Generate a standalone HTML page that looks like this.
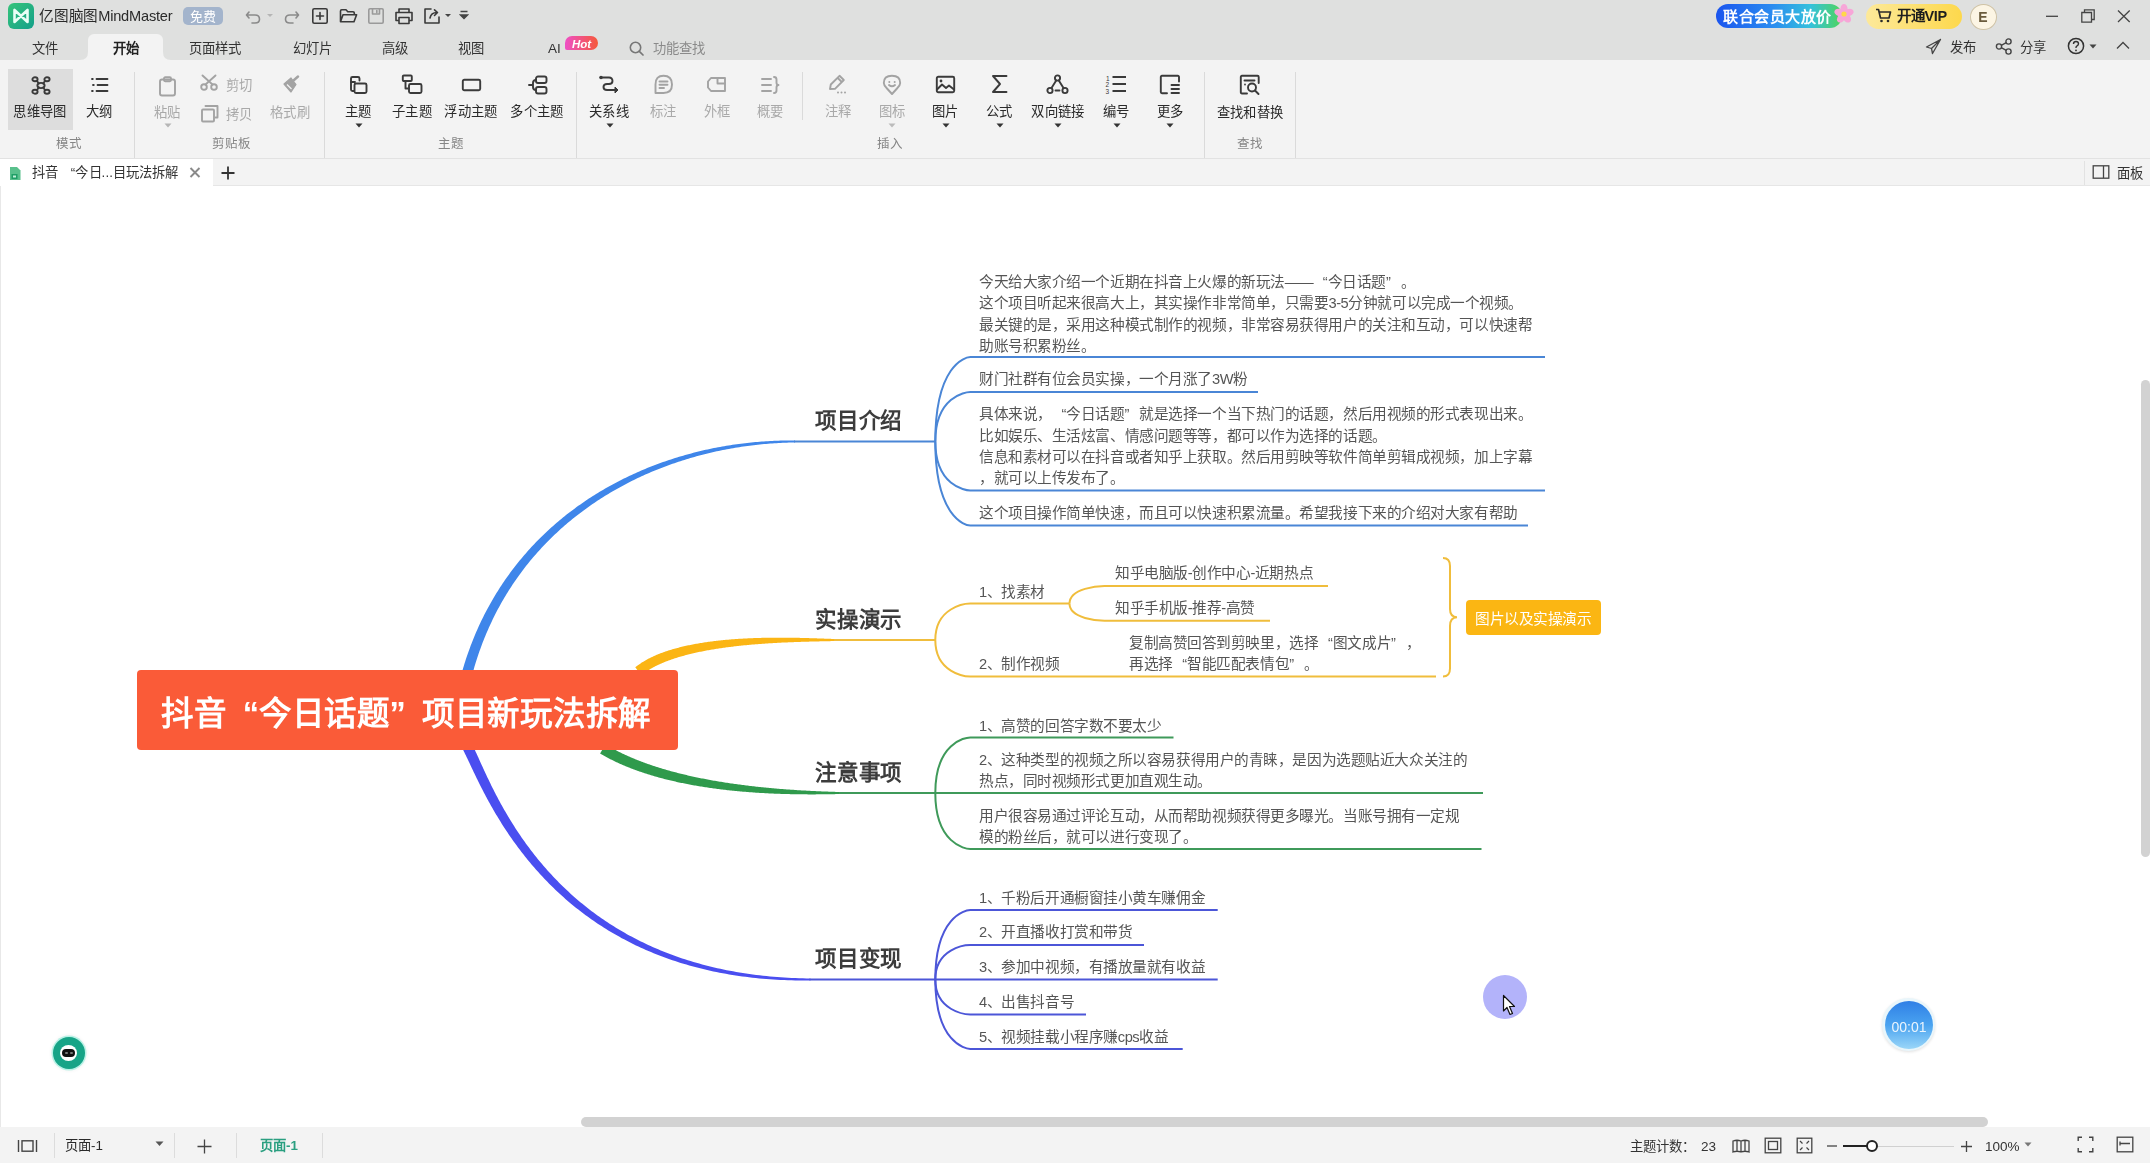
<!DOCTYPE html><html lang="zh-CN"><head><meta charset="utf-8"><style>
*{box-sizing:border-box;margin:0;padding:0}
html,body{width:2150px;height:1163px;overflow:hidden;background:#fff;font-family:"Liberation Sans",sans-serif;color:#333}
.a{position:absolute;white-space:nowrap}
.t{position:absolute;white-space:nowrap;line-height:1;will-change:transform}
</style></head><body>

<div class="a" style="left:0;top:0;width:2150px;height:60px;background:#dfe0df"></div>
<div class="a" style="left:0;top:60px;width:2150px;height:98px;background:#f3f3f3"></div>
<div class="a" style="left:0;top:158px;width:2150px;height:1px;background:#e2e2e2"></div>
<div class="a" style="left:0;top:159px;width:2150px;height:27px;background:#f3f3f3"></div>
<div class="a" style="left:213px;top:185px;width:1937px;height:1px;background:#e6e6e6"></div>
<div class="a" style="left:0;top:159px;width:213px;height:27px;background:#fff"></div>
<div class="a" style="left:0;top:186px;width:2150px;height:941px;background:#fff"></div>
<div class="a" style="left:0;top:186px;width:1px;height:941px;background:#e8e8e8"></div>
<div class="a" style="left:0;top:1127px;width:2150px;height:36px;background:#f3f3f3"></div>
<div class="a" style="left:581px;top:1117px;width:1407px;height:10px;border-radius:5px;background:#d2d2d2"></div>
<div class="a" style="left:2141px;top:380px;width:9px;height:476.5px;border-radius:4.5px;background:#d2d2d2"></div>
<div class="a" style="left:8px;top:3px;width:26px;height:26px;background:linear-gradient(135deg,#37c47a,#13a08a);border-radius:6px"></div>
<svg class="a" style="left:8px;top:3px;" width="26" height="26" viewBox="0 0 26 26"><path d="M6.5,7 L6.5,19 L13,13 Z M19.5,7 L19.5,19 L13,13 Z" fill="none" stroke="#e9fff6" stroke-width="2.6" stroke-linejoin="round"/></svg>
<div class="t" style="left:39.0px;top:8.5px;font-size:14.6px;font-weight:normal;letter-spacing:-0.2px;color:#2a2a2a;">亿图脑图MindMaster</div>
<div class="a" style="left:183px;top:7px;width:40px;height:18px;background:#a3b4cc;border-radius:5px"></div>
<div class="t" style="left:183.0px;top:9.9px;width:40px;text-align:center;font-size:13px;font-weight:normal;letter-spacing:0px;color:#fff;">免费</div>
<svg class="a" style="left:245px;top:7px;" width="16" height="18" viewBox="0 0 16 18"><path d="M4,5 L1.5,8 L4,11 M2,8 L10,8 Q14.5,8 14.5,12.2 Q14.5,16 10,16 L7,16" stroke="#8a8a8a" fill="none" stroke-width="1.6" stroke-linecap="round" stroke-linejoin="round"/></svg>
<svg class="a" style="left:266px;top:13px;" width="8" height="6" viewBox="0 0 8 6"><path d="M1,1 L7,1 L4,4 Z" fill="#b5b5b5"/></svg>
<svg class="a" style="left:284px;top:7px;" width="16" height="18" viewBox="0 0 16 18"><path d="M12,5 L14.5,8 L12,11 M14,8 L6,8 Q1.5,8 1.5,12.2 Q1.5,16 6,16 L9,16" stroke="#8a8a8a" fill="none" stroke-width="1.6" stroke-linecap="round" stroke-linejoin="round"/></svg>
<svg class="a" style="left:311px;top:7px;" width="18" height="18" viewBox="0 0 18 18"><rect x="1.8" y="1.8" width="14.4" height="14.4" rx="1.5" stroke="#3a3a3a" fill="none" stroke-width="1.6" stroke-linecap="round" stroke-linejoin="round"/><path d="M9,5.5 V12.5 M5.5,9 H12.5" stroke="#3a3a3a" fill="none" stroke-width="1.6" stroke-linecap="round" stroke-linejoin="round" stroke-width="1.9"/></svg>
<svg class="a" style="left:339px;top:8px;" width="19" height="16" viewBox="0 0 19 16"><path d="M1.5,13.5 V3 Q1.5,1.8 2.7,1.8 H7 L8.8,3.8 H14 Q15.3,3.8 15.3,5 V6.5 M1.5,13.8 L4,6.8 H17.6 L15,13.8 Z" stroke="#3a3a3a" fill="none" stroke-width="1.6" stroke-linecap="round" stroke-linejoin="round"/></svg>
<svg class="a" style="left:367px;top:7px;" width="18" height="18" viewBox="0 0 18 18"><rect x="1.8" y="1.8" width="14.4" height="14.4" rx="1.2" stroke="#9a9a9a" fill="none" stroke-width="1.6" stroke-linecap="round" stroke-linejoin="round"/><path d="M5.5,2 V7 H12.5 V2 M9.8,3.5 V5.5" stroke="#9a9a9a" fill="none" stroke-width="1.6" stroke-linecap="round" stroke-linejoin="round"/></svg>
<svg class="a" style="left:394px;top:7px;" width="20" height="18" viewBox="0 0 20 18"><path d="M5,5.5 V2 H15 V5.5 M4.5,13.5 H2 V5.5 H18 V13.5 H15.5 M5,10.5 H15 V16.5 H5 Z" stroke="#3a3a3a" fill="none" stroke-width="1.6" stroke-linecap="round" stroke-linejoin="round"/></svg>
<svg class="a" style="left:423px;top:7px;" width="18" height="18" viewBox="0 0 18 18"><path d="M8,2 H2 V16 H16 V10 M7,11 Q8,5.5 14,5.5 M11.5,2.8 L14.5,5.5 L11.5,8.5" stroke="#3a3a3a" fill="none" stroke-width="1.6" stroke-linecap="round" stroke-linejoin="round"/></svg>
<svg class="a" style="left:444px;top:13px;" width="8" height="6" viewBox="0 0 8 6"><path d="M1,1 L7,1 L4,4 Z" fill="#444"/></svg>
<svg class="a" style="left:459px;top:10px;" width="10" height="12" viewBox="0 0 10 12"><path d="M1.5,1.5 H8.5 M1.5,5 L8.5,5 L5,8.5 Z" stroke="#444" stroke-width="1.4" fill="#444"/></svg>
<div class="a" style="left:88px;top:34px;width:75px;height:27px;background:#f3f3f3;border-radius:6px 6px 0 0"></div>
<svg class="a" style="left:80px;top:52px;" width="8" height="8" viewBox="0 0 8 8"><path d="M0,8 Q8,8 8,0 V8 Z" fill="#f3f3f3"/></svg>
<svg class="a" style="left:163px;top:52px;" width="8" height="8" viewBox="0 0 8 8"><path d="M8,8 Q0,8 0,0 V8 Z" fill="#f3f3f3"/></svg>
<div class="t" style="left:15.0px;top:41.8px;width:60px;text-align:center;font-size:13.33px;font-weight:normal;letter-spacing:0px;color:#333;">文件</div>
<div class="t" style="left:95.5px;top:41.8px;width:60px;text-align:center;font-size:13.33px;font-weight:bold;letter-spacing:0px;color:#222;">开始</div>
<div class="t" style="left:175.0px;top:41.8px;width:80px;text-align:center;font-size:13.33px;font-weight:normal;letter-spacing:0px;color:#333;">页面样式</div>
<div class="t" style="left:272.0px;top:41.8px;width:80px;text-align:center;font-size:13.33px;font-weight:normal;letter-spacing:0px;color:#333;">幻灯片</div>
<div class="t" style="left:365.0px;top:41.8px;width:60px;text-align:center;font-size:13.33px;font-weight:normal;letter-spacing:0px;color:#333;">高级</div>
<div class="t" style="left:441.0px;top:41.8px;width:60px;text-align:center;font-size:13.33px;font-weight:normal;letter-spacing:0px;color:#333;">视图</div>
<div class="t" style="left:547.5px;top:42.2px;font-size:13.5px;font-weight:normal;letter-spacing:0px;color:#333;">AI</div>
<div class="a" style="left:565px;top:36px;width:33px;height:14px;border-radius:7px 7px 7px 2px;background:linear-gradient(90deg,#ee4fc6,#f5593a)"></div>
<div class="t" style="left:565.0px;top:38.5px;width:33px;text-align:center;font-size:11.5px;font-weight:bold;letter-spacing:0px;color:#fff;font-style:italic">Hot</div>
<svg class="a" style="left:629px;top:41px;" width="16" height="15" viewBox="0 0 16 15"><circle cx="6.5" cy="6.5" r="5.2" fill="none" stroke="#777" stroke-width="1.6"/><path d="M10.3,10.3 L14,14" stroke="#777" stroke-width="1.7" stroke-linecap="round"/></svg>
<div class="t" style="left:653.0px;top:42.3px;font-size:13.33px;font-weight:normal;letter-spacing:0px;color:#8a8a8a;">功能查找</div>
<div class="a" style="left:1716px;top:3.5px;width:126px;height:24.5px;border-radius:12.5px;background:linear-gradient(90deg,#1b55ee 0%,#2a8cf0 45%,#35c1dc 75%,#4fd55a 100%)"></div>
<div class="t" style="left:1723.0px;top:9.2px;font-size:15px;font-weight:bold;letter-spacing:0.5px;color:#fff;">联合会员大放价</div>
<svg class="a" style="left:1833px;top:3px;" width="22" height="22" viewBox="0 0 22 22"><g transform="translate(11,11)"><ellipse cx="0" cy="-5" rx="3.6" ry="5" fill="#f7a6d8" transform="rotate(0)"/><ellipse cx="0" cy="-5" rx="3.6" ry="5" fill="#f7a6d8" transform="rotate(72)"/><ellipse cx="0" cy="-5" rx="3.6" ry="5" fill="#f7a6d8" transform="rotate(144)"/><ellipse cx="0" cy="-5" rx="3.6" ry="5" fill="#f7a6d8" transform="rotate(216)"/><ellipse cx="0" cy="-5" rx="3.6" ry="5" fill="#f7a6d8" transform="rotate(288)"/><circle r="2.6" fill="#ffd84a"/></g></svg>
<div class="a" style="left:1866px;top:3.5px;width:96px;height:25px;border-radius:12.5px;background:linear-gradient(90deg,#fde99a,#fdd84c)"></div>
<svg class="a" style="left:1875px;top:8px;" width="17" height="15" viewBox="0 0 17 15"><path d="M1,1.5 H3.5 L5.5,10 H14 L15.5,4 H4.5" fill="none" stroke="#2a2a2a" stroke-width="1.7" stroke-linejoin="round"/><circle cx="6.5" cy="13" r="1.3" fill="#2a2a2a"/><circle cx="13" cy="13" r="1.3" fill="#2a2a2a"/></svg>
<div class="t" style="left:1897.0px;top:9.3px;font-size:14.5px;font-weight:bold;letter-spacing:-0.3px;color:#1e1e1e;">开通VIP</div>
<div class="a" style="left:1970px;top:3.5px;width:26.5px;height:26px;border-radius:50%;background:#fcf5e4;border:1.5px solid #cfc3a6"></div>
<div class="t" style="left:1970.2px;top:10.3px;width:26px;text-align:center;font-size:14px;font-weight:bold;letter-spacing:0px;color:#6a5b3c;">E</div>
<svg class="a" style="left:2044px;top:8px;" width="16" height="16" viewBox="0 0 16 16"><path d="M2,8.3 H14" stroke="#444" stroke-width="1.3"/></svg>
<svg class="a" style="left:2080px;top:8px;" width="16" height="16" viewBox="0 0 16 16"><path d="M4.5,4 V1.8 H14.2 V11.5 H12 M1.8,4.5 H11.5 V14.2 H1.8 Z" fill="none" stroke="#444" stroke-width="1.3"/></svg>
<svg class="a" style="left:2116px;top:8px;" width="16" height="16" viewBox="0 0 16 16"><path d="M2,2.5 L13.7,14 M13.7,2.5 L2,14" stroke="#444" stroke-width="1.3"/></svg>
<svg class="a" style="left:1925px;top:38px;" width="17" height="17" viewBox="0 0 17 17"><path d="M15.5,1.5 L1.5,9 L6.5,10.5 Z M15.5,1.5 L6.5,10.5 L7.5,15.5 Z" fill="none" stroke="#444" stroke-width="1.3" stroke-linejoin="round"/></svg>
<div class="t" style="left:1950.0px;top:41.3px;font-size:13.33px;font-weight:normal;letter-spacing:0px;color:#333;">发布</div>
<svg class="a" style="left:1995px;top:38px;" width="18" height="17" viewBox="0 0 18 17"><circle cx="4" cy="8.5" r="2.6" fill="none" stroke="#444" stroke-width="1.4"/><circle cx="13.5" cy="3.5" r="2.6" fill="none" stroke="#444" stroke-width="1.4"/><circle cx="13.5" cy="13.5" r="2.6" fill="none" stroke="#444" stroke-width="1.4"/><path d="M6.3,7.3 L11.2,4.7 M6.3,9.7 L11.2,12.3" stroke="#444" stroke-width="1.4"/></svg>
<div class="t" style="left:2020.0px;top:41.3px;font-size:13.33px;font-weight:normal;letter-spacing:0px;color:#333;">分享</div>
<svg class="a" style="left:2067px;top:37px;" width="18" height="18" viewBox="0 0 18 18"><circle cx="9" cy="9" r="7.6" fill="none" stroke="#333" stroke-width="1.5"/><path d="M6.5,7 Q6.5,4.5 9,4.5 Q11.5,4.5 11.5,6.8 Q11.5,8.3 9.5,9.3 Q9,9.6 9,11" fill="none" stroke="#333" stroke-width="1.4"/><circle cx="9" cy="13.4" r="0.9" fill="#333"/></svg>
<svg class="a" style="left:2089px;top:44px;" width="8" height="5" viewBox="0 0 8 5"><path d="M0.5,0.5 H7.5 L4,4.5 Z" fill="#444"/></svg>
<svg class="a" style="left:2115px;top:40px;" width="16" height="10" viewBox="0 0 16 10"><path d="M2,8.5 L8,2.5 L14,8.5" fill="none" stroke="#444" stroke-width="1.3"/></svg>
<div class="a" style="left:8px;top:69px;width:65px;height:61px;background:#dddddd;"></div>
<div class="a" style="left:134px;top:72px;width:1px;height:86px;background:#dadada;"></div>
<div class="a" style="left:324px;top:72px;width:1px;height:86px;background:#dadada;"></div>
<div class="a" style="left:575.5px;top:72px;width:1px;height:86px;background:#dadada;"></div>
<div class="a" style="left:802px;top:72px;width:1px;height:48px;background:#dadada;"></div>
<div class="a" style="left:1204px;top:72px;width:1px;height:86px;background:#dadada;"></div>
<div class="a" style="left:1294.5px;top:72px;width:1px;height:86px;background:#dadada;"></div>
<svg class="a" style="left:31.0px;top:76px;" width="20" height="19" viewBox="0 0 20 19"><ellipse cx="10" cy="9.5" rx="3.6" ry="2.6" stroke="#3a3a3a" fill="none" stroke-width="1.9" stroke-linecap="round" stroke-linejoin="round"/><ellipse cx="4" cy="3.3" rx="2.6" ry="2" stroke="#3a3a3a" fill="none" stroke-width="1.9" stroke-linecap="round" stroke-linejoin="round"/><ellipse cx="16" cy="3.3" rx="2.6" ry="2" stroke="#3a3a3a" fill="none" stroke-width="1.9" stroke-linecap="round" stroke-linejoin="round"/><ellipse cx="4" cy="15.7" rx="2.6" ry="2" stroke="#3a3a3a" fill="none" stroke-width="1.9" stroke-linecap="round" stroke-linejoin="round"/><ellipse cx="16" cy="15.7" rx="2.6" ry="2" stroke="#3a3a3a" fill="none" stroke-width="1.9" stroke-linecap="round" stroke-linejoin="round"/><path d="M6,5 L7.8,7.5 M14,5 L12.2,7.5 M6,14 L7.8,11.5 M14,14 L12.2,11.5" stroke="#3a3a3a" fill="none" stroke-width="1.9" stroke-linecap="round" stroke-linejoin="round"/></svg>
<div class="t" style="left:5.0px;top:105.4px;width:70px;text-align:center;font-size:13.33px;font-weight:normal;letter-spacing:0.3px;color:#2a2a2a;">思维导图</div>
<svg class="a" style="left:90.0px;top:76px;" width="20" height="18" viewBox="0 0 20 18"><path d="M2,3 H2.8 M6.5,3 H17.5 M3,9 H3.8 M7.5,9 H17.5 M2,15 H2.8 M6.5,15 H17.5" stroke="#3a3a3a" stroke-width="1.8" stroke-linecap="round"/></svg>
<div class="t" style="left:69.0px;top:105.4px;width:60px;text-align:center;font-size:13.33px;font-weight:normal;letter-spacing:0.3px;color:#2a2a2a;">大纲</div>
<div class="t" style="left:38.5px;top:138.1px;width:60px;text-align:center;font-size:12.5px;font-weight:normal;letter-spacing:0px;color:#858585;">模式</div>
<svg class="a" style="left:157.5px;top:76px;" width="19" height="21" viewBox="0 0 19 21"><rect x="2" y="3.5" width="15" height="16" rx="2" stroke="#a3a3a3" fill="none" stroke-width="1.9" stroke-linecap="round" stroke-linejoin="round"/><rect x="6" y="1.2" width="7" height="4" rx="1.2" stroke="#a3a3a3" fill="none" stroke-width="1.9" stroke-linecap="round" stroke-linejoin="round"/></svg>
<div class="t" style="left:137.0px;top:106.1px;width:60px;text-align:center;font-size:13.33px;font-weight:normal;letter-spacing:0.3px;color:#a9a9a9;">粘贴</div>
<svg class="a" style="left:163.5px;top:123px;" width="8" height="5" viewBox="0 0 8 5"><path d="M0.5,0.5 H7.5 L4,4.5 Z" fill="#b5b5b5"/></svg>
<svg class="a" style="left:200px;top:74px;" width="19" height="17" viewBox="0 0 19 17"><circle cx="4" cy="13" r="2.8" stroke="#a3a3a3" fill="none" stroke-width="1.9" stroke-linecap="round" stroke-linejoin="round"/><circle cx="14" cy="13" r="2.8" stroke="#a3a3a3" fill="none" stroke-width="1.9" stroke-linecap="round" stroke-linejoin="round"/><path d="M5.5,10.5 L15.5,1.5 M12.5,10.5 L2.5,1.5" stroke="#a3a3a3" fill="none" stroke-width="1.9" stroke-linecap="round" stroke-linejoin="round"/></svg>
<div class="t" style="left:226.0px;top:79.1px;font-size:13.33px;font-weight:normal;letter-spacing:0.3px;color:#a9a9a9;">剪切</div>
<svg class="a" style="left:200px;top:104px;" width="20" height="19" viewBox="0 0 20 19"><rect x="2" y="5.5" width="12" height="12" rx="1" stroke="#a3a3a3" fill="none" stroke-width="1.9" stroke-linecap="round" stroke-linejoin="round"/><path d="M5.5,2 H17.5 V13.5 H15.5" stroke="#a3a3a3" fill="none" stroke-width="1.9" stroke-linecap="round" stroke-linejoin="round"/></svg>
<div class="t" style="left:226.0px;top:108.4px;font-size:13.33px;font-weight:normal;letter-spacing:0.3px;color:#a9a9a9;">拷贝</div>
<svg class="a" style="left:280.5px;top:75px;" width="19" height="19" viewBox="0 0 19 19"><path d="M3,9 L10,3 L15,9.5 L10,17 Z" fill="#a3a3a3" stroke="#a3a3a3" stroke-width="1.2" stroke-linejoin="round"/><path d="M12.5,5.5 L17,1.5" stroke="#a3a3a3" stroke-width="2.4" stroke-linecap="round"/><path d="M6,9.5 L10.5,14" stroke="#f3f3f3" stroke-width="1.2"/></svg>
<div class="t" style="left:260.0px;top:106.1px;width:60px;text-align:center;font-size:13.33px;font-weight:normal;letter-spacing:0.3px;color:#a9a9a9;">格式刷</div>
<div class="t" style="left:201.0px;top:138.1px;width:60px;text-align:center;font-size:12.5px;font-weight:normal;letter-spacing:0px;color:#858585;">剪贴板</div>
<svg class="a" style="left:348.5px;top:75px;" width="20" height="21" viewBox="0 0 20 21"><path d="M5,16 H3.5 Q2,16 2,14.5 V3.5 Q2,2 3.5,2 H9 Q10.5,2 10.5,3.5 V5.5" stroke="#3a3a3a" fill="none" stroke-width="1.9" stroke-linecap="round" stroke-linejoin="round"/><rect x="5.5" y="8.5" width="12" height="9.5" rx="1.5" stroke="#3a3a3a" fill="none" stroke-width="1.9" stroke-linecap="round" stroke-linejoin="round"/><path d="M2,7 H6" stroke="#3a3a3a" fill="none" stroke-width="1.9" stroke-linecap="round" stroke-linejoin="round"/></svg>
<div class="t" style="left:328.0px;top:105.4px;width:60px;text-align:center;font-size:13.33px;font-weight:normal;letter-spacing:0.3px;color:#2a2a2a;">主题</div>
<svg class="a" style="left:354.5px;top:122.5px;" width="8" height="5" viewBox="0 0 8 5"><path d="M0.5,0.5 H7.5 L4,4.5 Z" fill="#333"/></svg>
<svg class="a" style="left:400.5px;top:74px;" width="22" height="21" viewBox="0 0 22 21"><rect x="1.8" y="1.5" width="9" height="5.5" rx="1" stroke="#3a3a3a" fill="none" stroke-width="1.9" stroke-linecap="round" stroke-linejoin="round"/><rect x="8" y="10" width="12.5" height="9" rx="1.5" stroke="#3a3a3a" fill="none" stroke-width="1.9" stroke-linecap="round" stroke-linejoin="round"/><path d="M4.5,7 V14.5 H8" stroke="#3a3a3a" fill="none" stroke-width="1.9" stroke-linecap="round" stroke-linejoin="round"/></svg>
<div class="t" style="left:381.5px;top:105.4px;width:60px;text-align:center;font-size:13.33px;font-weight:normal;letter-spacing:0.3px;color:#2a2a2a;">子主题</div>
<svg class="a" style="left:460.5px;top:78px;" width="21" height="14" viewBox="0 0 21 14"><rect x="1.8" y="1.8" width="17.4" height="10.4" rx="1.5" stroke="#3a3a3a" fill="none" stroke-width="1.9" stroke-linecap="round" stroke-linejoin="round"/></svg>
<div class="t" style="left:435.5px;top:105.4px;width:70px;text-align:center;font-size:13.33px;font-weight:normal;letter-spacing:0.3px;color:#2a2a2a;">浮动主题</div>
<svg class="a" style="left:526.5px;top:75px;" width="21" height="20" viewBox="0 0 21 20"><rect x="9" y="1.5" width="10.5" height="6.5" rx="2" stroke="#3a3a3a" fill="none" stroke-width="1.9" stroke-linecap="round" stroke-linejoin="round"/><rect x="9" y="12" width="10.5" height="6.5" rx="2" stroke="#3a3a3a" fill="none" stroke-width="1.9" stroke-linecap="round" stroke-linejoin="round"/><path d="M9,5 Q6,5 6,8 V10 L2,10 L6,10 V12 Q6,15 9,15" stroke="#3a3a3a" fill="none" stroke-width="1.9" stroke-linecap="round" stroke-linejoin="round"/></svg>
<div class="t" style="left:501.5px;top:105.4px;width:70px;text-align:center;font-size:13.33px;font-weight:normal;letter-spacing:0.3px;color:#2a2a2a;">多个主题</div>
<div class="t" style="left:421.0px;top:138.3px;width:60px;text-align:center;font-size:12.5px;font-weight:normal;letter-spacing:0px;color:#858585;">主题</div>
<svg class="a" style="left:598.0px;top:75px;" width="22" height="18" viewBox="0 0 22 18"><circle cx="3" cy="2.5" r="1.8" fill="#3a3a3a"/><path d="M3,2.5 H11 Q14.5,2.5 14.5,6 Q14.5,9 11,9 H9 Q5.5,9 5.5,12 Q5.5,15 9,15 H18" stroke="#3a3a3a" fill="none" stroke-width="1.9" stroke-linecap="round" stroke-linejoin="round" stroke-width="2"/><path d="M17,12 L20,15 L17,18 Z" fill="#3a3a3a" stroke="#3a3a3a" stroke-width="1"/></svg>
<div class="t" style="left:579.0px;top:105.4px;width:60px;text-align:center;font-size:13.33px;font-weight:normal;letter-spacing:0.3px;color:#2a2a2a;">关系线</div>
<svg class="a" style="left:605.5px;top:122.5px;" width="8" height="5" viewBox="0 0 8 5"><path d="M0.5,0.5 H7.5 L4,4.5 Z" fill="#333"/></svg>
<svg class="a" style="left:652.5px;top:74px;" width="21" height="21" viewBox="0 0 21 21"><path d="M10.5,1.8 Q19,1.8 19,10.5 Q19,19 10.5,19 H2.5 V10.5 Q2.5,1.8 10.5,1.8 Z" stroke="#a3a3a3" fill="none" stroke-width="1.9" stroke-linecap="round" stroke-linejoin="round"/><path d="M6.5,7.5 H14.5 M6.5,10.8 H14.5 M6.5,14 H11" stroke="#a3a3a3" fill="none" stroke-width="1.9" stroke-linecap="round" stroke-linejoin="round"/></svg>
<div class="t" style="left:633.0px;top:105.4px;width:60px;text-align:center;font-size:13.33px;font-weight:normal;letter-spacing:0.3px;color:#a9a9a9;">标注</div>
<svg class="a" style="left:706.0px;top:76px;" width="21" height="17" viewBox="0 0 21 17"><path d="M5,2 H19 V15 H5 L2,11.5 V5.5 Z" stroke="#a3a3a3" fill="none" stroke-width="1.9" stroke-linecap="round" stroke-linejoin="round"/><path d="M11.5,2.5 V7.5 H18.5" stroke="#a3a3a3" fill="none" stroke-width="1.9" stroke-linecap="round" stroke-linejoin="round"/></svg>
<div class="t" style="left:686.5px;top:105.4px;width:60px;text-align:center;font-size:13.33px;font-weight:normal;letter-spacing:0.3px;color:#a9a9a9;">外框</div>
<svg class="a" style="left:760.0px;top:75px;" width="20" height="20" viewBox="0 0 20 20"><path d="M2,4 H11 M2,10 H11 M2,16 H11" stroke="#a3a3a3" fill="none" stroke-width="1.9" stroke-linecap="round" stroke-linejoin="round"/><path d="M14,2 Q16.5,2 16.5,4.5 V7.5 Q16.5,10 18.5,10 Q16.5,10 16.5,12.5 V15.5 Q16.5,18 14,18" stroke="#a3a3a3" fill="none" stroke-width="1.9" stroke-linecap="round" stroke-linejoin="round"/></svg>
<div class="t" style="left:740.0px;top:105.4px;width:60px;text-align:center;font-size:13.33px;font-weight:normal;letter-spacing:0.3px;color:#a9a9a9;">概要</div>
<svg class="a" style="left:827.5px;top:74px;" width="20" height="21" viewBox="0 0 20 21"><path d="M2,15 L2.8,10.5 L11.5,1.8 L15.8,6 L7,14.8 Z M9.5,3.8 L13.8,8" stroke="#a3a3a3" fill="none" stroke-width="1.9" stroke-linecap="round" stroke-linejoin="round"/><circle cx="10" cy="18.5" r="1" fill="#a3a3a3"/><circle cx="13.5" cy="18.5" r="1" fill="#a3a3a3"/><circle cx="17" cy="18.5" r="1" fill="#a3a3a3"/></svg>
<div class="t" style="left:807.5px;top:105.4px;width:60px;text-align:center;font-size:13.33px;font-weight:normal;letter-spacing:0.3px;color:#a9a9a9;">注释</div>
<svg class="a" style="left:881.5px;top:74px;" width="20" height="22" viewBox="0 0 20 22"><path d="M10,20 L5,14.5 Q1.8,11.5 1.8,9 Q1.8,1.8 10,1.8 Q18.2,1.8 18.2,9 Q18.2,11.5 15,14.5 Z" stroke="#a3a3a3" fill="none" stroke-width="1.9" stroke-linecap="round" stroke-linejoin="round"/><circle cx="7.3" cy="8" r="1" fill="#a3a3a3"/><circle cx="12.7" cy="8" r="1" fill="#a3a3a3"/><path d="M7,11 Q10,13.5 13,11" stroke="#a3a3a3" fill="none" stroke-width="1.9" stroke-linecap="round" stroke-linejoin="round"/></svg>
<div class="t" style="left:861.5px;top:105.4px;width:60px;text-align:center;font-size:13.33px;font-weight:normal;letter-spacing:0.3px;color:#a9a9a9;">图标</div>
<svg class="a" style="left:887.5px;top:123px;" width="8" height="5" viewBox="0 0 8 5"><path d="M0.5,0.5 H7.5 L4,4.5 Z" fill="#bbbbbb"/></svg>
<svg class="a" style="left:934.5px;top:75px;" width="21" height="19" viewBox="0 0 21 19"><rect x="1.8" y="1.8" width="17.4" height="15.4" rx="1.5" stroke="#3a3a3a" fill="none" stroke-width="1.9" stroke-linecap="round" stroke-linejoin="round"/><circle cx="6" cy="6" r="1.4" fill="#3a3a3a"/><path d="M2,14.5 L7,9.5 L11,13 L14,10.5 L19,14.5" stroke="#3a3a3a" fill="none" stroke-width="1.9" stroke-linecap="round" stroke-linejoin="round"/></svg>
<div class="t" style="left:915.0px;top:105.4px;width:60px;text-align:center;font-size:13.33px;font-weight:normal;letter-spacing:0.3px;color:#2a2a2a;">图片</div>
<svg class="a" style="left:941.5px;top:122.5px;" width="8" height="5" viewBox="0 0 8 5"><path d="M0.5,0.5 H7.5 L4,4.5 Z" fill="#333"/></svg>
<svg class="a" style="left:990.5px;top:74px;" width="17" height="20" viewBox="0 0 17 20"><path d="M15.5,2 H2 L9,10 L2,18 H15.5" stroke="#3a3a3a" fill="none" stroke-width="1.9" stroke-linecap="round" stroke-linejoin="round" stroke-width="1.9"/></svg>
<div class="t" style="left:969.0px;top:105.4px;width:60px;text-align:center;font-size:13.33px;font-weight:normal;letter-spacing:0.3px;color:#2a2a2a;">公式</div>
<svg class="a" style="left:995.5px;top:122.5px;" width="8" height="5" viewBox="0 0 8 5"><path d="M0.5,0.5 H7.5 L4,4.5 Z" fill="#333"/></svg>
<svg class="a" style="left:1046.0px;top:74px;" width="23" height="21" viewBox="0 0 23 21"><circle cx="11.5" cy="4" r="2.6" stroke="#3a3a3a" fill="none" stroke-width="1.9" stroke-linecap="round" stroke-linejoin="round"/><circle cx="4" cy="16.5" r="2.6" stroke="#3a3a3a" fill="none" stroke-width="1.9" stroke-linecap="round" stroke-linejoin="round"/><circle cx="19" cy="16.5" r="2.6" stroke="#3a3a3a" fill="none" stroke-width="1.9" stroke-linecap="round" stroke-linejoin="round"/><path d="M10.2,6.5 L5.5,14 M12.8,6.5 L17.5,14 M9.5,16.5 H13.5" stroke="#3a3a3a" fill="none" stroke-width="1.9" stroke-linecap="round" stroke-linejoin="round"/></svg>
<div class="t" style="left:1022.5px;top:105.4px;width:70px;text-align:center;font-size:13.33px;font-weight:normal;letter-spacing:0.3px;color:#2a2a2a;">双向链接</div>
<svg class="a" style="left:1054px;top:122.5px;" width="8" height="5" viewBox="0 0 8 5"><path d="M0.5,0.5 H7.5 L4,4.5 Z" fill="#333"/></svg>
<svg class="a" style="left:1105.0px;top:74px;" width="22" height="21" viewBox="0 0 22 21"><path d="M7.5,3 H21 M7.5,10 H21 M7.5,17 H21" stroke="#3a3a3a" stroke-width="1.9"/><text x="1" y="6.5" font-size="6.5" fill="#3a3a3a" font-family="Liberation Sans">1</text><text x="0.5" y="13" font-size="6.5" fill="#3a3a3a" font-family="Liberation Sans">2</text><text x="0.5" y="20" font-size="6.5" fill="#3a3a3a" font-family="Liberation Sans">3</text></svg>
<div class="t" style="left:1086.0px;top:105.4px;width:60px;text-align:center;font-size:13.33px;font-weight:normal;letter-spacing:0.3px;color:#2a2a2a;">编号</div>
<svg class="a" style="left:1112.5px;top:122.5px;" width="8" height="5" viewBox="0 0 8 5"><path d="M0.5,0.5 H7.5 L4,4.5 Z" fill="#333"/></svg>
<svg class="a" style="left:1158.5px;top:74px;" width="22" height="21" viewBox="0 0 22 21"><path d="M20,7.5 V3 Q20,1.8 18.8,1.8 H3 Q1.8,1.8 1.8,3 V18 Q1.8,19.2 3,19.2 H8" stroke="#3a3a3a" fill="none" stroke-width="1.9" stroke-linecap="round" stroke-linejoin="round"/><path d="M12.5,11 H20 M12.5,15 H20 M12.5,19 H20" stroke="#3a3a3a" fill="none" stroke-width="1.9" stroke-linecap="round" stroke-linejoin="round"/></svg>
<div class="t" style="left:1139.5px;top:105.4px;width:60px;text-align:center;font-size:13.33px;font-weight:normal;letter-spacing:0.3px;color:#2a2a2a;">更多</div>
<svg class="a" style="left:1166px;top:122.5px;" width="8" height="5" viewBox="0 0 8 5"><path d="M0.5,0.5 H7.5 L4,4.5 Z" fill="#333"/></svg>
<div class="t" style="left:860.0px;top:138.3px;width:60px;text-align:center;font-size:12.5px;font-weight:normal;letter-spacing:0px;color:#858585;">插入</div>
<svg class="a" style="left:1238.5px;top:74px;" width="22" height="22" viewBox="0 0 22 22"><path d="M8,19.5 H3 Q1.8,19.5 1.8,18.3 V3 Q1.8,1.8 3,1.8 H18.5 Q19.7,1.8 19.7,3 V9" stroke="#3a3a3a" fill="none" stroke-width="1.9" stroke-linecap="round" stroke-linejoin="round"/><path d="M5.5,6.5 H15.5" stroke="#3a3a3a" fill="none" stroke-width="1.9" stroke-linecap="round" stroke-linejoin="round"/><circle cx="13" cy="13.5" r="4" stroke="#3a3a3a" fill="none" stroke-width="1.9" stroke-linecap="round" stroke-linejoin="round"/><path d="M16,16.5 L19.5,20" stroke="#3a3a3a" fill="none" stroke-width="1.9" stroke-linecap="round" stroke-linejoin="round" stroke-width="2"/><circle cx="6" cy="10.5" r="0.9" fill="#3a3a3a"/></svg>
<div class="t" style="left:1209.5px;top:105.9px;width:80px;text-align:center;font-size:13.33px;font-weight:normal;letter-spacing:0.3px;color:#2a2a2a;">查找和替换</div>
<div class="t" style="left:1220.0px;top:137.9px;width:60px;text-align:center;font-size:12.5px;font-weight:normal;letter-spacing:0px;color:#858585;">查找</div>
<svg class="a" style="left:8px;top:166px;" width="14" height="15" viewBox="0 0 14 15"><path d="M2,1 H9 L12.5,4.5 V14 H2 Z" fill="#59c08c"/><rect x="3.5" y="8" width="6" height="5" fill="#1f9e66"/><rect x="5" y="9.5" width="3" height="2" fill="#bff0d8"/></svg>
<div class="t" style="left:32.0px;top:166.4px;font-size:13.33px;font-weight:normal;letter-spacing:0.1px;color:#333;">抖音 <span style="display:inline-block;width:13.4px;text-align:right">“</span>今日...目玩法拆解</div>
<svg class="a" style="left:189px;top:166px;" width="12" height="13" viewBox="0 0 12 13"><path d="M1.5,2 L10.5,11 M10.5,2 L1.5,11" stroke="#8a8a8a" stroke-width="1.9"/></svg>
<svg class="a" style="left:220px;top:165px;" width="16" height="16" viewBox="0 0 16 16"><path d="M8,1.5 V14.5 M1.5,8 H14.5" stroke="#333" stroke-width="1.8"/></svg>
<svg class="a" style="left:2092px;top:164px;" width="18" height="16" viewBox="0 0 18 16"><rect x="1.2" y="1.8" width="15.6" height="12.4" fill="none" stroke="#444" stroke-width="1.3"/><path d="M11.5,2 V14" stroke="#444" stroke-width="1.3"/></svg>
<div class="t" style="left:2117.0px;top:166.6px;font-size:13.33px;font-weight:normal;letter-spacing:0px;color:#333;">面板</div>
<div class="a" style="left:2084px;top:161px;width:1px;height:24px;background:#e2e2e2;"></div>
<svg class="a" style="left:17px;top:1139px;" width="21" height="14" viewBox="0 0 21 14"><path d="M1.5,1 V13 M19.5,1 V13" stroke="#444" stroke-width="1.4"/><rect x="5" y="1.8" width="11" height="10.4" fill="none" stroke="#444" stroke-width="1.4"/></svg>
<div class="a" style="left:53.5px;top:1133px;width:1px;height:25px;background:#dcdcdc;"></div>
<div class="a" style="left:173.5px;top:1133px;width:1px;height:25px;background:#dcdcdc;"></div>
<div class="a" style="left:235.5px;top:1133px;width:1px;height:25px;background:#dcdcdc;"></div>
<div class="a" style="left:322px;top:1133px;width:1px;height:25px;background:#dcdcdc;"></div>
<div class="t" style="left:65.0px;top:1139.4px;font-size:13.33px;font-weight:normal;letter-spacing:0px;color:#2a2a2a;">页面-1</div>
<svg class="a" style="left:155px;top:1141px;" width="9" height="6" viewBox="0 0 9 6"><path d="M0.5,0.5 H8.5 L4.5,5 Z" fill="#555"/></svg>
<svg class="a" style="left:196px;top:1138px;" width="17" height="17" viewBox="0 0 17 17"><path d="M8.5,1.5 V15.5 M1.5,8.5 H15.5" stroke="#444" stroke-width="1.3"/></svg>
<div class="t" style="left:260.0px;top:1139.4px;font-size:13.33px;font-weight:bold;letter-spacing:0px;color:#2a9f80;">页面-1</div>
<div class="t" style="left:1630.0px;top:1140.1px;font-size:13.33px;font-weight:normal;letter-spacing:0px;color:#333;">主题计数：</div>
<div class="t" style="left:1701.0px;top:1140.0px;font-size:13.5px;font-weight:normal;letter-spacing:0px;color:#333;">23</div>
<svg class="a" style="left:1732px;top:1139px;" width="18" height="14" viewBox="0 0 18 14"><path d="M1,2 Q5,0.5 9,2 Q13,0.5 17,2 V13 Q13,11.5 9,13 Q5,11.5 1,13 Z M9,2 V13 M5,1.5 V12.5 M13,1.5 V12.5" fill="none" stroke="#444" stroke-width="1.3"/></svg>
<svg class="a" style="left:1764px;top:1137px;" width="18" height="17" viewBox="0 0 18 17"><rect x="1.2" y="1.2" width="15.6" height="14.6" fill="none" stroke="#444" stroke-width="1.3"/><rect x="4.5" y="4.5" width="9" height="8" fill="none" stroke="#444" stroke-width="1.3"/></svg>
<svg class="a" style="left:1796px;top:1137px;" width="17" height="17" viewBox="0 0 17 17"><rect x="1.2" y="1.2" width="14.6" height="14.6" fill="none" stroke="#444" stroke-width="1.3"/><path d="M4,4 L6.5,6.5 M13,4 L10.5,6.5 M4,13 L6.5,10.5 M13,13 L10.5,10.5" stroke="#444" stroke-width="1.2"/></svg>
<svg class="a" style="left:1826px;top:1140px;" width="12" height="12" viewBox="0 0 12 12"><path d="M1,6 H11" stroke="#444" stroke-width="1.3"/></svg>
<div class="a" style="left:1842.5px;top:1145px;width:25px;height:2.2px;background:#222;"></div>
<div class="a" style="left:1876px;top:1145.5px;width:78px;height:1.2px;background:#d0d0d0;"></div>
<div class="a" style="left:1865.5px;top:1140px;width:12px;height:12px;border-radius:50%;background:#fff;border:2.2px solid #222"></div>
<svg class="a" style="left:1960px;top:1140px;" width="13" height="13" viewBox="0 0 13 13"><path d="M6.5,1 V12 M1,6.5 H12" stroke="#444" stroke-width="1.3"/></svg>
<div class="t" style="left:1985.0px;top:1140.0px;font-size:13.5px;font-weight:normal;letter-spacing:0px;color:#333;">100%</div>
<svg class="a" style="left:2024px;top:1142px;" width="8" height="5" viewBox="0 0 8 5"><path d="M0.5,0.5 H7.5 L4,4.5 Z" fill="#777"/></svg>
<svg class="a" style="left:2077px;top:1136px;" width="17" height="17" viewBox="0 0 17 17"><path d="M1.2,5 V1.2 H5 M12,1.2 H15.8 V5 M15.8,12 V15.8 H12 M5,15.8 H1.2 V12" fill="none" stroke="#444" stroke-width="1.4"/></svg>
<svg class="a" style="left:2116px;top:1136px;" width="18" height="17" viewBox="0 0 18 17"><rect x="1.2" y="1.2" width="15.6" height="14.6" fill="none" stroke="#444" stroke-width="1.3"/><path d="M4,7.5 H14 M4,5.5 V9.5" stroke="#444" stroke-width="1.3"/></svg>
<div class="a" style="left:52.5px;top:1037px;width:32px;height:32px;border-radius:50%;background:#17a487;box-shadow:0 0 0 1.5px #b8f2e6,0 0 5px rgba(0,0,0,0.12)"></div>
<div class="a" style="left:60px;top:1045px;width:17px;height:16px;border-radius:50%;background:#fff"></div>
<div class="a" style="left:62px;top:1049px;width:13px;height:7.5px;border-radius:4px;background:#111"></div>
<div class="a" style="left:65px;top:1051.5px;width:2.5px;height:2.5px;border-radius:50%;background:#777"></div>
<div class="a" style="left:70px;top:1051.5px;width:2.5px;height:2.5px;border-radius:50%;background:#777"></div>
<div class="a" style="left:1483px;top:975px;width:44px;height:44px;border-radius:50%;background:#b3b3fa"></div>
<svg class="a" style="left:1502px;top:994px;" width="14" height="24" viewBox="0 0 14 24"><path d="M1.5,1.5 V17 L5,13.5 L8,20.5 L10.5,19.5 L7.5,12.5 L12.5,12.5 Z" fill="#fff" stroke="#111" stroke-width="1.2" stroke-linejoin="round"/></svg>
<div class="a" style="left:1882px;top:998px;width:53px;height:53px;border-radius:50%;background:#e9f6fb;box-shadow:0 1px 3px rgba(0,0,0,0.12)"></div>
<div class="a" style="left:1884.5px;top:1000.5px;width:48px;height:48px;border-radius:50%;background:linear-gradient(180deg,#2f7fe6 0%,#4aa3f0 50%,#9ad6f8 100%)"></div>
<div class="t" style="left:1878.5px;top:1019.5px;width:60px;text-align:center;font-size:14px;font-weight:normal;letter-spacing:0px;color:rgba(255,255,255,0.88);">00:01</div>
<svg class="a" style="left:0;top:0" width="2150" height="1163" viewBox="0 0 2150 1163"><path d="M460.68,714.70 L463.17,706.05 L465.65,697.40 L468.14,688.75 L470.63,680.10 L473.11,671.45 L473.77,669.14 L474.44,666.84 L475.13,664.56 L475.82,662.28 L476.54,660.02 L477.27,657.77 L478.01,655.53 L478.76,653.31 L479.53,651.09 L480.32,648.89 L481.12,646.70 L481.93,644.53 L482.75,642.36 L483.60,640.21 L484.45,638.07 L485.32,635.94 L486.20,633.83 L487.09,631.72 L488.00,629.63 L488.92,627.55 L489.86,625.48 L490.81,623.43 L491.77,621.38 L492.74,619.35 L493.73,617.33 L494.73,615.32 L495.74,613.33 L496.77,611.34 L497.81,609.37 L498.86,607.41 L499.93,605.46 L501.00,603.53 L502.09,601.60 L503.19,599.69 L504.31,597.79 L505.43,595.90 L506.57,594.03 L507.72,592.16 L508.89,590.31 L510.06,588.47 L511.25,586.64 L512.45,584.82 L513.66,583.02 L514.88,581.22 L516.11,579.44 L517.35,577.67 L518.61,575.91 L519.88,574.17 L521.16,572.43 L522.45,570.71 L523.75,569.00 L525.06,567.30 L526.38,565.61 L527.71,563.94 L529.06,562.27 L530.41,560.62 L531.78,558.98 L533.16,557.35 L534.54,555.73 L535.94,554.13 L537.35,552.53 L538.76,550.95 L540.19,549.38 L541.63,547.82 L543.08,546.28 L544.54,544.74 L546.00,543.22 L547.48,541.70 L548.97,540.20 L550.47,538.72 L551.97,537.24 L553.49,535.77 L555.01,534.32 L556.55,532.88 L558.09,531.45 L559.65,530.03 L561.21,528.62 L562.78,527.22 L564.36,525.84 L565.95,524.47 L567.55,523.11 L569.15,521.76 L570.77,520.42 L572.39,519.09 L574.02,517.78 L575.66,516.47 L577.31,515.18 L578.97,513.90 L580.63,512.63 L582.31,511.38 L583.99,510.13 L585.68,508.90 L587.37,507.67 L589.08,506.46 L590.79,505.26 L592.51,504.08 L594.24,502.90 L595.97,501.74 L597.71,500.58 L599.46,499.44 L601.22,498.31 L602.98,497.19 L604.75,496.08 L606.53,494.99 L608.32,493.90 L610.11,492.83 L611.91,491.77 L613.71,490.72 L615.52,489.68 L617.34,488.65 L619.16,487.64 L620.99,486.63 L622.83,485.64 L624.67,484.66 L626.52,483.69 L628.37,482.73 L630.24,481.78 L632.10,480.85 L633.97,479.92 L635.85,479.01 L637.73,478.11 L639.62,477.22 L641.52,476.34 L643.42,475.47 L645.32,474.62 L647.23,473.77 L649.15,472.94 L651.07,472.12 L652.99,471.30 L654.92,470.51 L656.86,469.72 L658.79,468.94 L660.74,468.18 L662.69,467.42 L664.64,466.68 L666.60,465.95 L668.56,465.23 L670.52,464.52 L672.49,463.82 L674.47,463.14 L676.44,462.46 L678.43,461.80 L680.41,461.15 L682.40,460.51 L684.39,459.88 L686.39,459.26 L688.39,458.65 L690.39,458.06 L692.40,457.47 L694.41,456.90 L696.42,456.34 L698.43,455.79 L700.45,455.25 L702.47,454.72 L704.50,454.20 L706.52,453.70 L708.55,453.20 L710.59,452.72 L712.62,452.25 L714.66,451.79 L716.70,451.34 L718.74,450.90 L720.78,450.47 L722.83,450.06 L724.87,449.65 L726.92,449.26 L728.97,448.88 L731.03,448.50 L733.08,448.14 L735.14,447.80 L737.20,447.46 L739.25,447.13 L741.31,446.81 L743.38,446.51 L745.44,446.22 L747.50,445.93 L749.57,445.66 L751.63,445.40 L753.70,445.16 L755.77,444.92 L757.83,444.69 L759.90,444.47 L761.97,444.27 L764.04,444.08 L766.11,443.89 L768.18,443.72 L770.25,443.56 L772.32,443.41 L774.39,443.28 L776.46,443.15 L778.53,443.03 L780.60,442.93 L782.67,442.83 L784.74,442.75 L786.81,442.68 L788.87,442.62 L790.94,442.57 L793.01,442.53 L795.08,442.50 L795.07,440.50 L793.00,440.48 L790.92,440.48 L788.84,440.48 L786.76,440.50 L784.68,440.53 L782.60,440.56 L780.51,440.61 L778.43,440.67 L776.35,440.75 L774.26,440.83 L772.17,440.92 L770.09,441.03 L768.00,441.14 L765.91,441.27 L763.83,441.41 L761.74,441.56 L759.65,441.72 L757.57,441.89 L755.48,442.07 L753.39,442.27 L751.30,442.47 L749.22,442.69 L747.13,442.92 L745.05,443.16 L742.96,443.41 L740.88,443.67 L738.79,443.95 L736.71,444.23 L734.63,444.53 L732.55,444.83 L730.47,445.15 L728.39,445.48 L726.31,445.82 L724.24,446.18 L722.16,446.54 L720.09,446.92 L718.02,447.30 L715.95,447.70 L713.88,448.11 L711.81,448.53 L709.75,448.97 L707.68,449.41 L705.62,449.87 L703.56,450.33 L701.51,450.81 L699.45,451.30 L697.40,451.81 L695.35,452.32 L693.31,452.84 L691.26,453.38 L689.22,453.93 L687.18,454.49 L685.15,455.06 L683.12,455.64 L681.09,456.23 L679.06,456.84 L677.04,457.46 L675.02,458.09 L673.00,458.73 L670.99,459.38 L668.98,460.04 L666.97,460.72 L664.97,461.41 L662.97,462.11 L660.98,462.82 L658.99,463.54 L657.00,464.27 L655.02,465.02 L653.04,465.78 L651.06,466.55 L649.09,467.33 L647.13,468.12 L645.17,468.93 L643.21,469.74 L641.26,470.57 L639.31,471.41 L637.37,472.27 L635.43,473.13 L633.50,474.01 L631.58,474.89 L629.65,475.79 L627.74,476.71 L625.83,477.63 L623.92,478.56 L622.02,479.51 L620.13,480.47 L618.24,481.44 L616.35,482.43 L614.48,483.42 L612.60,484.43 L610.74,485.45 L608.88,486.48 L607.03,487.52 L605.18,488.58 L603.34,489.65 L601.50,490.73 L599.68,491.82 L597.86,492.92 L596.04,494.04 L594.23,495.17 L592.43,496.31 L590.64,497.46 L588.85,498.62 L587.07,499.80 L585.30,500.99 L583.53,502.19 L581.78,503.40 L580.03,504.63 L578.28,505.87 L576.55,507.12 L574.82,508.38 L573.10,509.65 L571.39,510.94 L569.68,512.24 L567.99,513.55 L566.30,514.87 L564.62,516.21 L562.95,517.56 L561.28,518.92 L559.63,520.29 L557.98,521.68 L556.35,523.07 L554.72,524.48 L553.10,525.91 L551.49,527.34 L549.88,528.79 L548.29,530.25 L546.71,531.72 L545.13,533.20 L543.57,534.70 L542.01,536.21 L540.46,537.73 L538.93,539.27 L537.40,540.81 L535.88,542.37 L534.37,543.94 L532.87,545.53 L531.39,547.12 L529.91,548.73 L528.44,550.36 L526.98,551.99 L525.54,553.64 L524.10,555.30 L522.67,556.97 L521.26,558.65 L519.85,560.35 L518.46,562.06 L517.07,563.78 L515.70,565.52 L514.34,567.27 L512.99,569.03 L511.65,570.80 L510.32,572.59 L509.01,574.38 L507.70,576.20 L506.41,578.02 L505.13,579.86 L503.86,581.71 L502.60,583.57 L501.35,585.44 L500.12,587.33 L498.90,589.23 L497.69,591.14 L496.49,593.07 L495.31,595.01 L494.13,596.96 L492.97,598.92 L491.83,600.90 L490.69,602.89 L489.57,604.89 L488.46,606.91 L487.36,608.93 L486.28,610.98 L485.21,613.03 L484.16,615.10 L483.11,617.17 L482.08,619.27 L481.07,621.37 L480.06,623.49 L479.07,625.62 L478.10,627.76 L477.14,629.92 L476.19,632.09 L475.26,634.27 L474.34,636.47 L473.43,638.67 L472.54,640.89 L471.67,643.13 L470.81,645.37 L469.96,647.63 L469.13,649.91 L468.31,652.19 L467.51,654.49 L466.72,656.80 L465.95,659.12 L465.19,661.46 L464.45,663.81 L463.73,666.17 L463.02,668.55 L460.53,677.20 L458.05,685.85 L455.56,694.50 L453.08,703.15 L450.59,711.80Z" fill="#3f86ea"/><path d="M444.22,712.08 L448.24,720.14 L452.26,728.19 L456.28,736.24 L460.30,744.29 L464.32,752.34 L464.65,753.00 L464.99,753.69 L465.34,754.39 L465.69,755.12 L466.06,755.87 L466.43,756.64 L466.81,757.43 L467.20,758.25 L467.59,759.08 L468.00,759.94 L468.41,760.81 L468.83,761.70 L469.26,762.62 L469.70,763.55 L470.15,764.50 L470.60,765.47 L471.07,766.46 L471.54,767.46 L472.02,768.48 L472.51,769.52 L473.01,770.58 L473.52,771.65 L474.04,772.74 L474.57,773.85 L475.11,774.97 L475.65,776.11 L476.21,777.26 L476.78,778.43 L477.35,779.61 L477.94,780.81 L478.54,782.02 L479.15,783.24 L479.76,784.48 L480.39,785.73 L481.03,787.00 L481.68,788.27 L482.34,789.56 L483.01,790.87 L483.69,792.18 L484.39,793.51 L485.09,794.84 L485.81,796.19 L486.53,797.55 L487.27,798.92 L488.02,800.31 L488.78,801.70 L489.56,803.10 L490.35,804.51 L491.14,805.93 L491.95,807.36 L492.78,808.80 L493.61,810.25 L494.46,811.70 L495.32,813.17 L496.19,814.64 L497.08,816.12 L497.98,817.61 L498.89,819.10 L499.82,820.60 L500.75,822.11 L501.71,823.63 L502.67,825.15 L503.65,826.67 L504.64,828.21 L505.65,829.75 L506.67,831.29 L507.71,832.84 L508.76,834.39 L509.82,835.94 L510.90,837.51 L511.99,839.07 L513.10,840.64 L514.22,842.21 L515.36,843.79 L516.51,845.36 L517.68,846.94 L518.86,848.53 L520.06,850.11 L521.27,851.70 L522.50,853.29 L523.74,854.87 L525.00,856.46 L526.28,858.06 L527.57,859.65 L528.88,861.24 L530.20,862.83 L531.54,864.42 L532.90,866.02 L534.27,867.61 L535.66,869.20 L537.07,870.79 L538.49,872.37 L539.93,873.96 L541.39,875.54 L542.87,877.12 L544.36,878.70 L545.87,880.28 L547.40,881.85 L548.94,883.42 L550.50,884.99 L552.08,886.55 L553.68,888.11 L555.30,889.66 L556.93,891.21 L558.59,892.75 L560.26,894.29 L561.95,895.83 L563.66,897.36 L565.38,898.88 L567.13,900.40 L568.89,901.91 L570.68,903.41 L572.48,904.91 L574.30,906.40 L576.14,907.88 L578.00,909.36 L579.89,910.82 L581.79,912.28 L583.71,913.73 L585.64,915.17 L587.60,916.61 L589.58,918.03 L591.58,919.45 L593.60,920.85 L595.64,922.25 L597.71,923.63 L599.79,925.01 L601.89,926.37 L604.01,927.72 L606.16,929.07 L608.32,930.40 L610.51,931.72 L612.72,933.02 L614.94,934.32 L617.19,935.60 L619.47,936.87 L621.76,938.13 L624.07,939.37 L626.41,940.60 L628.77,941.82 L631.15,943.02 L633.55,944.21 L635.98,945.38 L638.43,946.54 L640.90,947.69 L643.39,948.82 L645.90,949.93 L648.44,951.03 L651.00,952.11 L653.59,953.18 L656.19,954.23 L658.82,955.26 L661.47,956.28 L664.15,957.28 L666.85,958.26 L669.57,959.22 L672.32,960.17 L675.09,961.10 L677.89,962.01 L680.71,962.90 L683.55,963.77 L686.42,964.62 L689.31,965.46 L692.22,966.27 L695.16,967.06 L698.13,967.84 L701.12,968.59 L704.13,969.33 L707.17,970.04 L710.23,970.73 L713.32,971.40 L716.44,972.05 L719.58,972.67 L722.74,973.28 L725.93,973.86 L729.15,974.42 L732.39,974.96 L735.66,975.47 L738.95,975.96 L742.27,976.43 L745.62,976.87 L748.99,977.29 L752.39,977.68 L755.82,978.05 L759.27,978.40 L762.75,978.72 L766.25,979.01 L769.79,979.28 L773.35,979.53 L776.93,979.75 L780.55,979.94 L784.19,980.10 L787.86,980.24 L791.55,980.35 L795.28,980.44 L799.03,980.50 L802.81,980.53 L806.62,980.53 L810.45,980.50 L810.46,978.50 L806.63,978.45 L802.84,978.36 L799.08,978.25 L795.35,978.12 L791.64,977.96 L787.97,977.77 L784.32,977.55 L780.70,977.31 L777.12,977.04 L773.56,976.75 L770.02,976.44 L766.52,976.09 L763.04,975.73 L759.60,975.34 L756.18,974.92 L752.79,974.48 L749.42,974.02 L746.08,973.54 L742.77,973.03 L739.49,972.50 L736.24,971.94 L733.01,971.37 L729.81,970.77 L726.64,970.15 L723.49,969.50 L720.37,968.84 L717.27,968.16 L714.20,967.45 L711.16,966.73 L708.15,965.98 L705.16,965.21 L702.19,964.43 L699.26,963.62 L696.34,962.80 L693.46,961.95 L690.59,961.09 L687.76,960.21 L684.95,959.31 L682.16,958.39 L679.40,957.46 L676.66,956.50 L673.95,955.53 L671.26,954.55 L668.60,953.54 L665.96,952.52 L663.34,951.48 L660.75,950.43 L658.19,949.36 L655.64,948.27 L653.12,947.17 L650.63,946.06 L648.15,944.93 L645.70,943.78 L643.28,942.62 L640.87,941.45 L638.49,940.26 L636.14,939.06 L633.80,937.85 L631.49,936.62 L629.20,935.38 L626.93,934.13 L624.68,932.86 L622.46,931.59 L620.26,930.30 L618.08,929.00 L615.92,927.68 L613.78,926.36 L611.67,925.02 L609.57,923.68 L607.50,922.32 L605.45,920.96 L603.42,919.58 L601.40,918.20 L599.41,916.80 L597.45,915.40 L595.50,913.98 L593.57,912.56 L591.66,911.13 L589.77,909.69 L587.90,908.24 L586.05,906.79 L584.22,905.33 L582.42,903.86 L580.63,902.38 L578.85,900.90 L577.10,899.41 L575.37,897.91 L573.66,896.41 L571.96,894.90 L570.29,893.38 L568.63,891.86 L566.99,890.34 L565.37,888.81 L563.77,887.28 L562.18,885.74 L560.62,884.19 L559.07,882.65 L557.54,881.10 L556.02,879.54 L554.53,877.99 L553.05,876.42 L551.59,874.86 L550.15,873.30 L548.72,871.73 L547.31,870.16 L545.92,868.59 L544.54,867.01 L543.18,865.44 L541.84,863.86 L540.51,862.29 L539.20,860.71 L537.91,859.13 L536.63,857.55 L535.37,855.98 L534.12,854.40 L532.89,852.82 L531.67,851.25 L530.47,849.67 L529.29,848.10 L528.12,846.53 L526.96,844.96 L525.82,843.39 L524.70,841.83 L523.59,840.26 L522.49,838.70 L521.41,837.15 L520.34,835.59 L519.29,834.04 L518.25,832.50 L517.23,830.95 L516.22,829.41 L515.22,827.88 L514.24,826.35 L513.27,824.83 L512.31,823.31 L511.37,821.79 L510.44,820.29 L509.52,818.78 L508.62,817.29 L507.73,815.80 L506.85,814.32 L505.99,812.84 L505.13,811.37 L504.29,809.91 L503.47,808.46 L502.65,807.01 L501.85,805.57 L501.05,804.14 L500.27,802.72 L499.51,801.31 L498.75,799.90 L498.00,798.51 L497.27,797.12 L496.55,795.75 L495.84,794.38 L495.14,793.03 L494.45,791.69 L493.77,790.35 L493.10,789.03 L492.44,787.72 L491.79,786.42 L491.16,785.13 L490.53,783.85 L489.91,782.59 L489.31,781.33 L488.71,780.09 L488.12,778.87 L487.55,777.65 L486.98,776.45 L486.42,775.27 L485.87,774.09 L485.33,772.93 L484.80,771.79 L484.28,770.66 L483.76,769.54 L483.26,768.44 L482.76,767.35 L482.27,766.28 L481.79,765.22 L481.32,764.18 L480.86,763.16 L480.40,762.15 L479.95,761.16 L479.51,760.18 L479.08,759.23 L478.65,758.28 L478.24,757.36 L477.82,756.45 L477.42,755.56 L477.02,754.69 L476.63,753.83 L476.25,753.00 L475.87,752.18 L475.49,751.38 L475.13,750.60 L474.76,749.83 L474.41,749.09 L474.06,748.36 L473.71,747.66 L469.69,739.60 L465.67,731.55 L461.65,723.50 L457.63,715.45 L453.61,707.39Z" fill="#4a4ef0"/><path d="M641.33,675.19 L641.65,674.94 L641.97,674.70 L642.28,674.46 L642.60,674.22 L642.90,673.99 L643.54,673.50 L644.17,673.04 L644.82,672.57 L645.47,672.12 L646.13,671.66 L646.81,671.21 L647.49,670.76 L648.18,670.32 L648.89,669.88 L649.60,669.45 L650.32,669.01 L651.05,668.59 L651.80,668.16 L652.55,667.75 L653.31,667.33 L654.08,666.92 L654.86,666.51 L655.65,666.11 L656.45,665.71 L657.25,665.32 L658.07,664.93 L658.89,664.54 L659.73,664.16 L660.57,663.78 L661.42,663.41 L662.28,663.04 L663.14,662.67 L664.02,662.31 L664.90,661.96 L665.79,661.60 L666.69,661.25 L667.59,660.91 L668.50,660.57 L669.42,660.23 L670.35,659.89 L671.28,659.56 L672.22,659.24 L673.17,658.92 L674.13,658.60 L675.09,658.29 L676.06,657.98 L677.03,657.67 L678.01,657.37 L679.00,657.07 L679.99,656.77 L680.99,656.48 L681.99,656.19 L683.00,655.91 L684.02,655.63 L685.04,655.35 L686.06,655.08 L687.10,654.81 L688.13,654.55 L689.18,654.29 L690.22,654.03 L691.27,653.77 L692.33,653.52 L693.39,653.28 L694.46,653.03 L695.52,652.79 L696.60,652.55 L697.68,652.32 L698.76,652.09 L699.84,651.86 L700.93,651.64 L702.03,651.42 L703.12,651.20 L704.22,650.99 L705.33,650.78 L706.43,650.57 L707.54,650.37 L708.65,650.17 L709.77,649.97 L710.89,649.77 L712.01,649.58 L713.13,649.39 L714.26,649.21 L715.39,649.03 L716.52,648.85 L717.65,648.67 L718.78,648.50 L719.92,648.33 L721.05,648.16 L722.19,647.99 L723.33,647.83 L724.48,647.67 L725.62,647.51 L726.77,647.36 L727.91,647.21 L729.06,647.06 L730.20,646.92 L731.35,646.77 L732.50,646.63 L733.65,646.49 L734.80,646.36 L735.95,646.23 L737.10,646.10 L738.25,645.97 L739.40,645.84 L740.55,645.72 L741.70,645.60 L742.85,645.48 L744.00,645.36 L745.15,645.25 L746.29,645.14 L747.44,645.03 L748.59,644.92 L749.73,644.82 L750.87,644.72 L752.02,644.62 L753.16,644.52 L754.30,644.42 L755.43,644.33 L756.57,644.24 L757.70,644.15 L758.84,644.06 L759.97,643.97 L761.09,643.89 L762.22,643.80 L763.34,643.72 L764.46,643.65 L765.58,643.57 L766.70,643.49 L767.81,643.42 L768.92,643.35 L770.03,643.28 L771.13,643.21 L772.23,643.15 L773.33,643.08 L774.42,643.02 L775.51,642.96 L776.60,642.90 L777.68,642.84 L778.76,642.78 L779.83,642.73 L780.90,642.67 L781.97,642.62 L783.03,642.57 L784.08,642.52 L785.14,642.47 L786.18,642.42 L787.23,642.38 L788.27,642.33 L789.30,642.29 L790.33,642.25 L791.35,642.20 L792.37,642.16 L793.38,642.13 L794.38,642.09 L795.39,642.05 L796.38,642.01 L797.37,641.98 L798.35,641.95 L799.33,641.91 L800.30,641.88 L801.26,641.85 L802.22,641.82 L803.17,641.79 L804.12,641.76 L805.05,641.74 L805.98,641.71 L806.91,641.68 L807.82,641.66 L808.73,641.63 L809.64,641.61 L810.53,641.59 L811.42,641.56 L812.30,641.54 L813.17,641.52 L814.03,641.50 L814.89,641.48 L815.74,641.46 L816.58,641.44 L817.41,641.42 L818.23,641.40 L819.04,641.38 L819.85,641.36 L820.65,641.35 L821.43,641.33 L822.21,641.31 L822.98,641.30 L823.74,641.28 L824.50,641.26 L825.24,641.25 L825.97,641.23 L826.69,641.21 L827.41,641.20 L828.11,641.18 L828.80,641.16 L829.49,641.15 L830.16,641.13 L830.82,641.12 L831.48,641.10 L832.12,641.08 L832.75,641.07 L833.37,641.05 L833.98,641.03 L834.58,641.02 L835.17,641.00 L835.17,639.00 L834.58,638.98 L833.98,638.96 L833.38,638.94 L832.76,638.92 L832.13,638.90 L831.49,638.88 L830.83,638.86 L830.17,638.84 L829.50,638.81 L828.82,638.79 L828.13,638.76 L827.42,638.74 L826.71,638.71 L825.99,638.69 L825.26,638.66 L824.51,638.63 L823.76,638.60 L823.00,638.58 L822.23,638.55 L821.45,638.52 L820.67,638.49 L819.87,638.47 L819.06,638.44 L818.25,638.41 L817.42,638.38 L816.59,638.35 L815.75,638.32 L814.90,638.30 L814.05,638.27 L813.18,638.24 L812.31,638.21 L811.43,638.18 L810.54,638.16 L809.64,638.13 L808.74,638.10 L807.83,638.08 L806.91,638.05 L805.98,638.03 L805.05,638.00 L804.11,637.98 L803.16,637.95 L802.21,637.93 L801.25,637.91 L800.28,637.89 L799.30,637.87 L798.32,637.85 L797.34,637.83 L796.34,637.81 L795.35,637.79 L794.34,637.77 L793.33,637.76 L792.31,637.74 L791.29,637.73 L790.26,637.71 L789.23,637.70 L788.19,637.69 L787.15,637.68 L786.10,637.67 L785.04,637.67 L783.98,637.66 L782.92,637.66 L781.85,637.65 L780.78,637.65 L779.70,637.65 L778.62,637.65 L777.53,637.65 L776.44,637.66 L775.35,637.66 L774.25,637.67 L773.15,637.68 L772.04,637.69 L770.93,637.70 L769.82,637.71 L768.70,637.73 L767.58,637.75 L766.46,637.77 L765.33,637.79 L764.20,637.81 L763.07,637.83 L761.93,637.86 L760.79,637.89 L759.65,637.92 L758.51,637.95 L757.37,637.99 L756.22,638.03 L755.07,638.06 L753.92,638.11 L752.76,638.15 L751.61,638.20 L750.45,638.25 L749.29,638.30 L748.13,638.35 L746.97,638.41 L745.80,638.46 L744.64,638.53 L743.47,638.59 L742.31,638.65 L741.14,638.72 L739.97,638.79 L738.80,638.87 L737.63,638.95 L736.46,639.03 L735.29,639.11 L734.12,639.19 L732.95,639.28 L731.78,639.37 L730.61,639.47 L729.43,639.56 L728.26,639.66 L727.09,639.77 L725.92,639.87 L724.75,639.98 L723.59,640.09 L722.42,640.21 L721.25,640.33 L720.08,640.45 L718.92,640.58 L717.75,640.71 L716.59,640.84 L715.43,640.97 L714.27,641.11 L713.11,641.26 L711.96,641.40 L710.80,641.55 L709.65,641.71 L708.50,641.86 L707.35,642.02 L706.20,642.19 L705.06,642.36 L703.92,642.53 L702.78,642.71 L701.64,642.89 L700.51,643.07 L699.38,643.26 L698.25,643.45 L697.13,643.65 L696.00,643.85 L694.89,644.05 L693.77,644.26 L692.66,644.47 L691.55,644.69 L690.45,644.91 L689.35,645.13 L688.25,645.36 L687.16,645.60 L686.07,645.83 L684.98,646.08 L683.90,646.32 L682.83,646.58 L681.75,646.83 L680.69,647.09 L679.63,647.36 L678.57,647.63 L677.52,647.91 L676.47,648.19 L675.43,648.47 L674.39,648.76 L673.36,649.05 L672.33,649.35 L671.31,649.66 L670.29,649.97 L669.28,650.28 L668.28,650.60 L667.28,650.93 L666.29,651.26 L665.30,651.60 L664.32,651.94 L663.35,652.28 L662.38,652.64 L661.42,652.99 L660.46,653.36 L659.52,653.72 L658.57,654.10 L657.64,654.48 L656.71,654.87 L655.79,655.26 L654.88,655.65 L653.98,656.06 L653.08,656.47 L652.19,656.88 L651.30,657.31 L650.43,657.73 L649.56,658.17 L648.70,658.61 L647.85,659.06 L647.01,659.51 L646.17,659.97 L645.35,660.44 L644.53,660.91 L643.72,661.39 L642.92,661.88 L642.13,662.37 L641.35,662.87 L640.57,663.38 L639.81,663.89 L639.05,664.42 L638.31,664.94 L637.57,665.48 L636.87,666.01 L636.53,666.27 L636.21,666.51 L635.90,666.75 L635.58,667.00 L635.26,667.24Z" fill="#fbb514"/><path d="M600.11,753.54 L600.46,753.74 L600.80,753.94 L601.15,754.14 L601.49,754.34 L601.85,754.55 L602.72,755.05 L603.60,755.55 L604.49,756.04 L605.38,756.53 L606.28,757.02 L607.18,757.51 L608.09,757.99 L609.00,758.46 L609.92,758.93 L610.84,759.40 L611.76,759.87 L612.69,760.33 L613.62,760.78 L614.56,761.24 L615.50,761.68 L616.45,762.13 L617.40,762.57 L618.35,763.01 L619.31,763.45 L620.27,763.88 L621.24,764.30 L622.21,764.73 L623.18,765.15 L624.16,765.57 L625.14,765.98 L626.13,766.39 L627.12,766.79 L628.11,767.20 L629.11,767.60 L630.12,767.99 L631.12,768.38 L632.13,768.77 L633.15,769.16 L634.16,769.54 L635.18,769.92 L636.21,770.29 L637.24,770.66 L638.27,771.03 L639.31,771.40 L640.35,771.76 L641.39,772.12 L642.44,772.47 L643.49,772.82 L644.55,773.17 L645.61,773.52 L646.67,773.86 L647.73,774.20 L648.80,774.53 L649.88,774.86 L650.95,775.19 L652.03,775.52 L653.12,775.84 L654.20,776.16 L655.29,776.47 L656.39,776.78 L657.48,777.09 L658.58,777.40 L659.69,777.70 L660.79,778.00 L661.90,778.30 L663.02,778.59 L664.14,778.88 L665.26,779.17 L666.38,779.46 L667.51,779.74 L668.64,780.02 L669.77,780.29 L670.91,780.56 L672.04,780.83 L673.19,781.10 L674.33,781.36 L675.48,781.62 L676.63,781.88 L677.79,782.13 L678.95,782.38 L680.11,782.63 L681.27,782.88 L682.44,783.12 L683.61,783.36 L684.78,783.60 L685.96,783.83 L687.13,784.06 L688.32,784.29 L689.50,784.51 L690.69,784.74 L691.88,784.96 L693.07,785.17 L694.27,785.39 L695.46,785.60 L696.66,785.81 L697.87,786.01 L699.08,786.21 L700.28,786.41 L701.50,786.61 L702.71,786.81 L703.93,787.00 L705.15,787.19 L706.37,787.37 L707.60,787.56 L708.82,787.74 L710.05,787.91 L711.29,788.09 L712.52,788.26 L713.76,788.43 L715.00,788.60 L716.24,788.77 L717.49,788.93 L718.73,789.09 L719.98,789.24 L721.24,789.40 L722.49,789.55 L723.75,789.70 L725.01,789.85 L726.27,789.99 L727.53,790.13 L728.80,790.27 L730.07,790.41 L731.34,790.54 L732.61,790.67 L733.89,790.80 L735.16,790.93 L736.44,791.05 L737.72,791.18 L739.01,791.30 L740.29,791.41 L741.58,791.53 L742.87,791.64 L744.16,791.75 L745.46,791.86 L746.75,791.96 L748.05,792.06 L749.35,792.16 L750.65,792.26 L751.96,792.36 L753.26,792.45 L754.57,792.54 L755.88,792.63 L757.19,792.71 L758.51,792.80 L759.82,792.88 L761.14,792.96 L762.46,793.04 L763.78,793.11 L765.10,793.18 L766.42,793.25 L767.75,793.32 L769.08,793.39 L770.41,793.45 L771.74,793.51 L773.07,793.57 L774.40,793.63 L775.74,793.68 L777.07,793.74 L778.41,793.79 L779.75,793.83 L781.10,793.88 L782.44,793.92 L783.78,793.97 L785.13,794.01 L786.48,794.04 L787.83,794.08 L789.18,794.11 L790.53,794.15 L791.88,794.18 L793.24,794.20 L794.59,794.23 L795.95,794.25 L797.31,794.27 L798.67,794.29 L800.03,794.31 L801.39,794.33 L802.76,794.34 L804.12,794.35 L805.49,794.36 L806.86,794.37 L808.23,794.38 L809.59,794.38 L810.97,794.38 L812.34,794.38 L813.71,794.38 L815.08,794.38 L816.46,794.37 L817.84,794.36 L819.21,794.35 L820.59,794.34 L821.97,794.33 L823.35,794.31 L824.73,794.30 L826.11,794.28 L827.50,794.26 L828.88,794.24 L830.26,794.21 L831.65,794.19 L833.04,794.16 L834.42,794.13 L835.81,794.10 L837.20,794.07 L838.59,794.04 L839.98,794.00 L839.98,792.00 L838.59,791.96 L837.20,791.92 L835.82,791.88 L834.43,791.84 L833.05,791.80 L831.67,791.75 L830.28,791.71 L828.90,791.66 L827.52,791.61 L826.14,791.56 L824.77,791.51 L823.39,791.45 L822.01,791.40 L820.64,791.34 L819.27,791.28 L817.90,791.22 L816.52,791.16 L815.16,791.10 L813.79,791.04 L812.42,790.97 L811.05,790.90 L809.69,790.83 L808.33,790.76 L806.96,790.69 L805.60,790.61 L804.25,790.54 L802.89,790.46 L801.53,790.38 L800.18,790.30 L798.82,790.22 L797.47,790.13 L796.12,790.05 L794.77,789.96 L793.43,789.87 L792.08,789.78 L790.74,789.69 L789.39,789.59 L788.05,789.50 L786.71,789.40 L785.38,789.30 L784.04,789.20 L782.71,789.09 L781.37,788.99 L780.04,788.88 L778.71,788.77 L777.39,788.66 L776.06,788.55 L774.74,788.43 L773.41,788.32 L772.09,788.20 L770.78,788.08 L769.46,787.96 L768.15,787.83 L766.83,787.71 L765.52,787.58 L764.22,787.45 L762.91,787.32 L761.60,787.19 L760.30,787.05 L759.00,786.92 L757.70,786.78 L756.41,786.64 L755.11,786.49 L753.82,786.35 L752.53,786.20 L751.24,786.05 L749.96,785.90 L748.68,785.75 L747.39,785.60 L746.12,785.44 L744.84,785.28 L743.56,785.12 L742.29,784.96 L741.02,784.79 L739.76,784.62 L738.49,784.46 L737.23,784.28 L735.97,784.11 L734.71,783.94 L733.46,783.76 L732.20,783.58 L730.95,783.40 L729.71,783.21 L728.46,783.03 L727.22,782.84 L725.98,782.65 L724.74,782.46 L723.50,782.26 L722.27,782.07 L721.04,781.87 L719.82,781.67 L718.59,781.46 L717.37,781.26 L716.15,781.05 L714.93,780.84 L713.72,780.63 L712.51,780.41 L711.30,780.20 L710.10,779.98 L708.89,779.76 L707.70,779.53 L706.50,779.31 L705.31,779.08 L704.11,778.85 L702.93,778.62 L701.74,778.38 L700.56,778.15 L699.38,777.91 L698.21,777.67 L697.03,777.42 L695.86,777.18 L694.70,776.93 L693.53,776.68 L692.37,776.42 L691.21,776.17 L690.06,775.91 L688.91,775.65 L687.76,775.38 L686.62,775.12 L685.47,774.85 L684.34,774.58 L683.20,774.31 L682.07,774.03 L680.94,773.75 L679.82,773.47 L678.70,773.19 L677.58,772.91 L676.46,772.62 L675.35,772.33 L674.24,772.04 L673.14,771.74 L672.04,771.44 L670.94,771.14 L669.84,770.84 L668.75,770.54 L667.67,770.23 L666.58,769.92 L665.50,769.60 L664.43,769.29 L663.35,768.97 L662.28,768.65 L661.22,768.33 L660.16,768.00 L659.10,767.67 L658.04,767.34 L656.99,767.01 L655.95,766.67 L654.90,766.34 L653.86,765.99 L652.83,765.65 L651.80,765.30 L650.77,764.95 L649.74,764.60 L648.72,764.25 L647.71,763.89 L646.69,763.53 L645.69,763.17 L644.68,762.80 L643.68,762.44 L642.68,762.06 L641.69,761.69 L640.70,761.32 L639.72,760.94 L638.74,760.55 L637.76,760.17 L636.79,759.78 L635.82,759.39 L634.86,759.00 L633.90,758.61 L632.94,758.21 L631.99,757.81 L631.04,757.40 L630.10,757.00 L629.16,756.59 L628.22,756.18 L627.29,755.76 L626.37,755.35 L625.44,754.93 L624.53,754.50 L623.61,754.08 L622.70,753.65 L621.80,753.22 L620.90,752.78 L620.00,752.35 L619.11,751.91 L618.23,751.46 L617.34,751.02 L616.46,750.57 L615.59,750.12 L614.72,749.66 L613.86,749.21 L613.00,748.75 L612.14,748.29 L611.29,747.82 L610.44,747.35 L609.60,746.88 L608.76,746.41 L607.93,745.93 L607.09,745.45 L606.75,745.26 L606.41,745.06 L606.06,744.85 L605.71,744.65 L605.37,744.45Z" fill="#2f9a4c"/><line x1="794.0727342410552" y1="441.5" x2="936" y2="441.5" stroke="#4a86d6" stroke-width="2"/><line x1="834.1670490055451" y1="640.0" x2="936" y2="640.0" stroke="#f0bd3c" stroke-width="2"/><line x1="838.9784033355581" y1="793.0" x2="936" y2="793.0" stroke="#3f9a5a" stroke-width="2"/><line x1="809.4537466695743" y1="979.5" x2="936" y2="979.5" stroke="#4c56d8" stroke-width="2"/><path d="M935.3,441.5 C935.3,365.45 965.05,357 970.3,357 L1545,357" fill="none" stroke="#4a86d6" stroke-width="2"/><path d="M935.3,441.5 C935.3,396.95 965.05,392 970.3,392 L1258,392" fill="none" stroke="#4a86d6" stroke-width="2"/><path d="M935.3,441.5 C935.3,485.60 965.05,490.5 970.3,490.5 L1545,490.5" fill="none" stroke="#4a86d6" stroke-width="2"/><path d="M935.3,441.5 C935.3,517.10 965.05,525.5 970.3,525.5 L1528,525.5" fill="none" stroke="#4a86d6" stroke-width="2"/><path d="M935.3,640 C935.3,607.24 965.05,603.6 970.3,603.6 L1069.5,603.6" fill="none" stroke="#f0bd3c" stroke-width="2"/><path d="M935.3,640 C935.3,672.85 965.05,676.5 970.3,676.5 L1436,676.5" fill="none" stroke="#f0bd3c" stroke-width="2"/><path d="M1069.5,603.6 C1069.5,587.76 1099.25,586 1104.5,586 L1328,586" fill="none" stroke="#f0bd3c" stroke-width="2"/><path d="M1069.5,603.6 C1069.5,618.99 1099.25,620.7 1104.5,620.7 L1270,620.7" fill="none" stroke="#f0bd3c" stroke-width="2"/><path d="M1443,558 Q1450,558 1450,566 L1450,609 Q1450,617 1457,617.3 Q1450,617.6 1450,626 L1450,668.5 Q1450,676.5 1443,676.5" fill="none" stroke="#f0bd3c" stroke-width="2"/><path d="M935.3,793 C935.3,742.96 965.05,737.4 970.3,737.4 L1173.5,737.4" fill="none" stroke="#3f9a5a" stroke-width="2"/><path d="M935.3,793 C935.3,793.00 965.05,793 970.3,793 L1483,793" fill="none" stroke="#3f9a5a" stroke-width="2"/><path d="M935.3,793 C935.3,843.40 965.05,849 970.3,849 L1481.5,849" fill="none" stroke="#3f9a5a" stroke-width="2"/><path d="M935.3,979.6 C935.3,916.96 965.05,910 970.3,910 L1217.7,910" fill="none" stroke="#4c56d8" stroke-width="2"/><path d="M935.3,979.6 C935.3,948.46 965.05,945 970.3,945 L1144,945" fill="none" stroke="#4c56d8" stroke-width="2"/><path d="M935.3,979.6 C935.3,979.60 965.05,979.6 970.3,979.6 L1217.7,979.6" fill="none" stroke="#4c56d8" stroke-width="2"/><path d="M935.3,979.6 C935.3,1010.92 965.05,1014.4 970.3,1014.4 L1086,1014.4" fill="none" stroke="#4c56d8" stroke-width="2"/><path d="M935.3,979.6 C935.3,1042.06 965.05,1049 970.3,1049 L1182.7,1049" fill="none" stroke="#4c56d8" stroke-width="2"/></svg>
<div class="a" style="left:137px;top:670px;width:541px;height:80px;background:#fa5b38;border-radius:4px"></div>
<div class="t" style="left:161px;top:698px;font-size:32.5px;letter-spacing:-0.32px;font-weight:bold;color:#fff">抖音<span style="display:inline-block;width:32.5px;text-align:right;letter-spacing:0">“</span>今日话题<span style="display:inline-block;width:32.5px;text-align:left;letter-spacing:0">”</span>项目新玩法拆解</div>
<div class="t" style="left:815px;top:411px;font-size:21.5px;letter-spacing:-0.25px;font-weight:bold;color:#3c3c3c">项目介绍</div>
<div class="t" style="left:815px;top:610px;font-size:21.5px;letter-spacing:-0.25px;font-weight:bold;color:#3c3c3c">实操演示</div>
<div class="t" style="left:815px;top:763px;font-size:21.5px;letter-spacing:-0.25px;font-weight:bold;color:#3c3c3c">注意事项</div>
<div class="t" style="left:815px;top:949px;font-size:21.5px;letter-spacing:-0.25px;font-weight:bold;color:#3c3c3c">项目变现</div>
<div class="t" style="left:979px;top:275.0px;font-size:14.67px;letter-spacing:-0.44px;color:#555555">今天给大家介绍一个近期在抖音上火爆的新玩法——<span style="display:inline-block;width:14.56px;text-align:right;letter-spacing:0">“</span>今日话题<span style="display:inline-block;width:14.56px;text-align:left;letter-spacing:0">”</span>。</div>
<div class="t" style="left:979px;top:295.9px;font-size:14.67px;letter-spacing:-0.44px;color:#555555">这个项目听起来很高大上，其实操作非常简单，只需要3-5分钟就可以完成一个视频。</div>
<div class="t" style="left:979px;top:317.5px;font-size:14.67px;letter-spacing:-0.44px;color:#555555">最关键的是，采用这种模式制作的视频，非常容易获得用户的关注和互动，可以快速帮</div>
<div class="t" style="left:979px;top:338.8px;font-size:14.67px;letter-spacing:-0.44px;color:#555555">助账号积累粉丝。</div>
<div class="t" style="left:979px;top:372.3px;font-size:14.67px;letter-spacing:-0.44px;color:#555555">财门社群有位会员实操，一个月涨了3W粉</div>
<div class="t" style="left:979px;top:407.4px;font-size:14.67px;letter-spacing:-0.44px;color:#555555">具体来说，<span style="display:inline-block;width:14.56px;text-align:right;letter-spacing:0">“</span>今日话题<span style="display:inline-block;width:14.56px;text-align:left;letter-spacing:0">”</span>就是选择一个当下热门的话题，然后用视频的形式表现出来。</div>
<div class="t" style="left:979px;top:428.7px;font-size:14.67px;letter-spacing:-0.44px;color:#555555">比如娱乐、生活炫富、情感问题等等，都可以作为选择的话题。</div>
<div class="t" style="left:979px;top:449.6px;font-size:14.67px;letter-spacing:-0.44px;color:#555555">信息和素材可以在抖音或者知乎上获取。然后用剪映等软件简单剪辑成视频，加上字幕</div>
<div class="t" style="left:979px;top:471.2px;font-size:14.67px;letter-spacing:-0.44px;color:#555555">，就可以上传发布了。</div>
<div class="t" style="left:979px;top:505.8px;font-size:14.67px;letter-spacing:-0.44px;color:#555555">这个项目操作简单快速，而且可以快速积累流量。希望我接下来的介绍对大家有帮助</div>
<div class="t" style="left:979px;top:584.9px;font-size:14.67px;letter-spacing:-0.44px;color:#555555">1、找素材</div>
<div class="t" style="left:979px;top:657.1px;font-size:14.67px;letter-spacing:-0.44px;color:#555555">2、制作视频</div>
<div class="t" style="left:979px;top:719.3px;font-size:14.67px;letter-spacing:-0.44px;color:#555555">1、高赞的回答字数不要太少</div>
<div class="t" style="left:979px;top:752.6px;font-size:14.67px;letter-spacing:-0.44px;color:#555555">2、这种类型的视频之所以容易获得用户的青睐，是因为选题贴近大众关注的</div>
<div class="t" style="left:979px;top:773.9px;font-size:14.67px;letter-spacing:-0.44px;color:#555555">热点，同时视频形式更加直观生动。</div>
<div class="t" style="left:979px;top:808.6px;font-size:14.67px;letter-spacing:-0.44px;color:#555555">用户很容易通过评论互动，从而帮助视频获得更多曝光。当账号拥有一定规</div>
<div class="t" style="left:979px;top:829.9px;font-size:14.67px;letter-spacing:-0.44px;color:#555555">模的粉丝后，就可以进行变现了。</div>
<div class="t" style="left:979px;top:891.3px;font-size:14.67px;letter-spacing:-0.44px;color:#555555">1、千粉后开通橱窗挂小黄车赚佣金</div>
<div class="t" style="left:979px;top:925.3px;font-size:14.67px;letter-spacing:-0.44px;color:#555555">2、开直播收打赏和带货</div>
<div class="t" style="left:979px;top:959.8px;font-size:14.67px;letter-spacing:-0.44px;color:#555555">3、参加中视频，有播放量就有收益</div>
<div class="t" style="left:979px;top:994.9px;font-size:14.67px;letter-spacing:-0.44px;color:#555555">4、出售抖音号</div>
<div class="t" style="left:979px;top:1030.0px;font-size:14.67px;letter-spacing:-0.44px;color:#555555">5、视频挂载小程序赚cps收益</div>
<div class="t" style="left:1114.6px;top:565.8px;font-size:14.67px;letter-spacing:-0.44px;color:#555555">知乎电脑版-创作中心-近期热点</div>
<div class="t" style="left:1114.6px;top:600.8px;font-size:14.67px;letter-spacing:-0.44px;color:#555555">知乎手机版-推荐-高赞</div>
<div class="t" style="left:1128.8px;top:635.9px;font-size:14.67px;letter-spacing:-0.44px;color:#555555">复制高赞回答到剪映里，选择<span style="display:inline-block;width:14.56px;text-align:right;letter-spacing:0">“</span>图文成片<span style="display:inline-block;width:14.56px;text-align:left;letter-spacing:0">”</span>，</div>
<div class="t" style="left:1128.8px;top:657.2px;font-size:14.67px;letter-spacing:-0.44px;color:#555555">再选择<span style="display:inline-block;width:14.56px;text-align:right;letter-spacing:0">“</span>智能匹配表情包<span style="display:inline-block;width:14.56px;text-align:left;letter-spacing:0">”</span>。</div>
<div class="a" style="left:1465.5px;top:600px;width:135px;height:35px;background:#fbb613;border-radius:4px"></div>
<div class="t" style="left:1475px;top:612.3px;font-size:14.67px;letter-spacing:-0.44px;color:#fff">图片以及实操演示</div>
</body></html>
